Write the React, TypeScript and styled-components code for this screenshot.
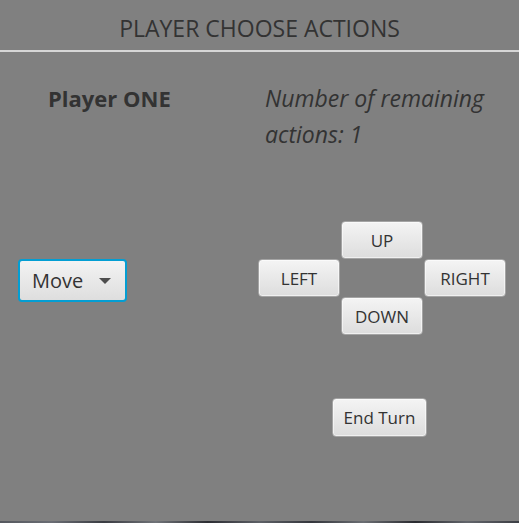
import React from "react";
import styled, { createGlobalStyle } from "styled-components";

const GlobalStyle = createGlobalStyle`
  html, body {
    margin: 0;
    padding: 0;
    background: #808080;
  }
  body {
    font-family: "Open Sans", "Liberation Sans", sans-serif;
    color: #333333;
  }
`;

const Screen = styled.div`
  width: 519px;
  height: 523px;
  display: flex;
  flex-direction: column;
  background: #808080;
  overflow: hidden;
`;

const Header = styled.header`
  display: flex;
  align-items: center;
  justify-content: center;
  border-bottom: 2px solid #d6d6d6;
  box-sizing: border-box;
  height: 52px;
`;

const Title = styled.h1`
  margin: 0;
  padding-top: 6px;
  font-size: 23px;
  font-weight: 400;
  color: #333333;
  letter-spacing: 0;
`;

const Body = styled.div`
  flex: 1;
  display: grid;
  grid-template-columns: 258px 1fr;
  grid-template-rows: 150px 135px 1fr;
`;

const Cell = styled.div<{ $pl?: number; $pt?: number }>`
  padding-left: ${(p) => p.$pl ?? 0}px;
  padding-top: ${(p) => p.$pt ?? 0}px;
  display: flex;
  align-items: flex-start;
`;

const PlayerName = styled.div`
  font-size: 22px;
  font-weight: 700;
  line-height: 26px;
`;

const Remaining = styled.div`
  font-size: 23px;
  font-style: italic;
  line-height: 36px;
  width: 250px;
`;

const Combo = styled.div`
  width: 109px;
  height: 43px;
  box-sizing: border-box;
  border: 2px solid #039ed3;
  border-radius: 4px;
  background: linear-gradient(#f3f3f3, #dedede);
  display: flex;
  align-items: center;
  justify-content: space-between;
  padding: 0 14px 0 12px;
  font-size: 20px;
  color: #333333;
`;

const Arrow = styled.span`
  width: 0;
  height: 0;
  border-left: 6px solid transparent;
  border-right: 6px solid transparent;
  border-top: 6px solid #4d4d4d;
`;

const Pad = styled.div`
  display: grid;
  grid-template-columns: repeat(3, 82px);
  grid-template-rows: repeat(3, 38px);
  column-gap: 1px;
`;

const FxButton = styled.button<{ $col: number; $row: number }>`
  grid-column: ${(p) => p.$col};
  grid-row: ${(p) => p.$row};
  margin: 0;
  box-sizing: border-box;
  border: 1px solid #a4a4a4;
  border-radius: 4px;
  background: linear-gradient(#f4f4f4, #dddddd);
  box-shadow: inset 0 0 0 1px rgba(255, 255, 255, 0.55);
  font-family: "Open Sans", "Liberation Sans", sans-serif;
  font-size: 17px;
  color: #333333;
  padding: 0;
`;

const EndTurn = styled.button`
  width: 95px;
  height: 39px;
  box-sizing: border-box;
  border: 1px solid #a4a4a4;
  border-radius: 4px;
  background: linear-gradient(#f4f4f4, #dddddd);
  box-shadow: inset 0 0 0 1px rgba(255, 255, 255, 0.55);
  font-family: "Open Sans", "Liberation Sans", sans-serif;
  font-size: 17px;
  color: #333333;
  padding: 0;
`;

const Strip = styled.div`
  height: 2px;
  background: linear-gradient(
    90deg,
    #55585e 0%,
    #6a6d74 10%,
    #3a3c42 20%,
    #707378 30%,
    #2c2d33 40%,
    #5d6066 50%,
    #34363c 60%,
    #6b6e73 70%,
    #2a2b30 80%,
    #62656b 90%,
    #3c3e44 100%
  );
`;

export default function App() {
  return (
    <Screen>
      <GlobalStyle />
      <Header>
        <Title>PLAYER CHOOSE ACTIONS</Title>
      </Header>
      <Body>
        <Cell $pl={48} $pt={33}>
          <PlayerName>Player ONE</PlayerName>
        </Cell>
        <Cell $pl={7} $pt={28}>
          <Remaining>Number of remaining actions: 1</Remaining>
        </Cell>
        <Cell $pl={18} $pt={57}>
          <Combo>
            Move
            <Arrow />
          </Combo>
        </Cell>
        <Cell $pt={19}>
          <Pad>
            <FxButton $col={2} $row={1}>UP</FxButton>
            <FxButton $col={1} $row={2}>LEFT</FxButton>
            <FxButton $col={3} $row={2}>RIGHT</FxButton>
            <FxButton $col={2} $row={3}>DOWN</FxButton>
          </Pad>
        </Cell>
        <Cell />
        <Cell $pl={74} $pt={61}>
          <EndTurn>End Turn</EndTurn>
        </Cell>
      </Body>
      <Strip />
    </Screen>
  );
}
